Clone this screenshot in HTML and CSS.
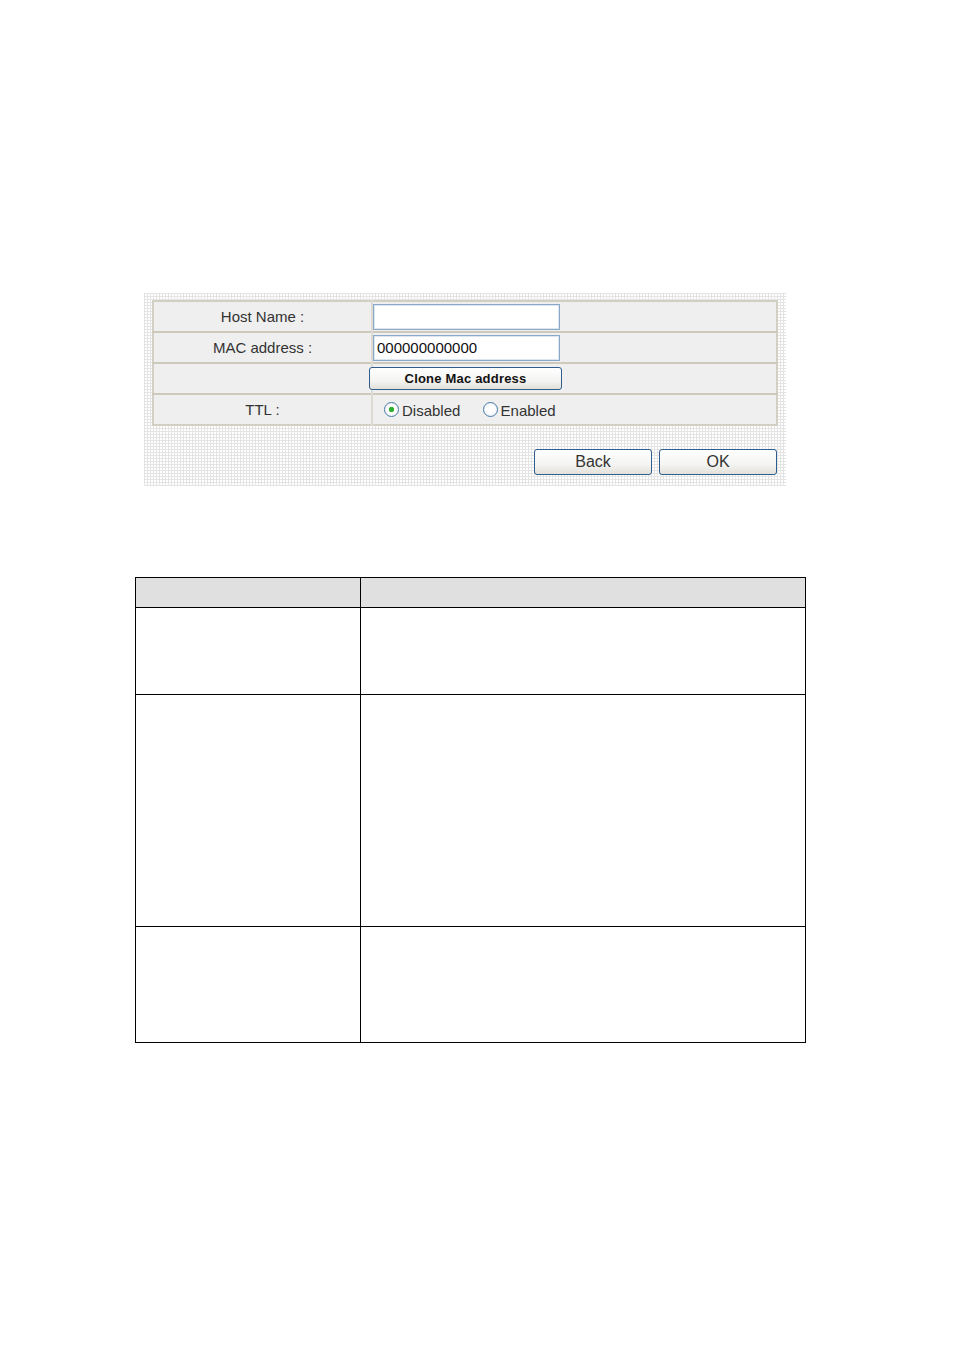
FILE: index.html
```html
<!DOCTYPE html>
<html>
<head>
<meta charset="utf-8">
<link rel="stylesheet" href="styles.css">
</head>
<body>
<div class="page">
  <div class="panel">
    <table class="form">
      <tr>
        <td class="label">Host Name :</td>
        <td class="value"><span class="input"></span></td>
      </tr>
      <tr>
        <td class="label">MAC address :</td>
        <td class="value"><span class="input">000000000000</span></td>
      </tr>
      <tr>
        <td class="label empty"></td>
        <td class="value"><span class="btn clone">Clone Mac address</span></td>
      </tr>
      <tr>
        <td class="label">TTL :</td>
        <td class="value radios">
          <span class="radio checked"></span><span class="rlabel">Disabled</span>
          <span class="radio second"></span><span class="rlabel">Enabled</span>
        </td>
      </tr>
    </table>
    <div class="actions">
      <span class="btn big">Back</span>
      <span class="btn big">OK</span>
    </div>
  </div>

  <table class="desc">
    <tr class="head"><td class="c1"></td><td class="c2"></td></tr>
    <tr class="r1"><td></td><td></td></tr>
    <tr class="r2"><td></td><td></td></tr>
    <tr class="r3"><td></td><td></td></tr>
  </table>
</div>
</body>
</html>
```

FILE: styles.css
```css
html, body {
  margin: 0;
  padding: 0;
  background: #ffffff;
}

.page {
  padding-top: 293px;
  font-family: "Liberation Sans", Arial, sans-serif;
}

.panel {
  margin-left: 144px;
  width: 642px;
  height: 193px;
  box-sizing: border-box;
  padding: 7px 0 0 8px;
  background-color: #ffffff;
  background-image:
    linear-gradient(to right, #e4e4e4 1px, transparent 1px),
    linear-gradient(to bottom, #e4e4e4 1px, transparent 1px);
  background-size: 3px 3px;
}

.form {
  width: 626px;
  border-collapse: collapse;
  border: 2px solid #d2cfc4;
  background: #efefef;
}

.form td {
  height: 29px;
  padding: 0;
  border-top: 2px solid #cdc9bb;
  font-size: 15px;
  color: #333;
}

.form tr:first-child td {
  border-top: none;
}

.form .label {
  width: 217px;
  text-align: center;
  border-right: 2px solid #dcdad2;
}

.input {
  display: flex;
  align-items: center;
  box-sizing: border-box;
  width: 187px;
  height: 26px;
  background: #ffffff;
  border: 1px solid #8aa8c8;
  box-shadow: inset 0 0 0 1px #dde6ef;
  padding-left: 3px;
  font-size: 15px;
  color: #111;
}

.btn {
  display: inline-flex;
  align-items: center;
  justify-content: center;
  box-sizing: border-box;
  border: 1px solid #2d5e8e;
  border-radius: 3px;
  background: linear-gradient(to bottom, #ffffff 0%, #f4f4f2 60%, #e2e0da 100%);
  color: #111;
}

.clone {
  width: 193px;
  height: 23px;
  margin-left: -4px;
  font-weight: bold;
  font-size: 13px;
  letter-spacing: 0.2px;
}

.radio {
  display: inline-block;
  vertical-align: middle;
  box-sizing: border-box;
  width: 15px;
  height: 15px;
  border-radius: 50%;
  border: 1px solid #4a7aa8;
  background: radial-gradient(circle, #ffffff 40%, #dfe6ee 100%);
  margin-left: 11px;
  margin-right: 3px;
  position: relative;
  top: -1px;
}

.radio.checked {
  background: radial-gradient(circle, #2fb02f 0, #2fb02f 2.5px, #ffffff 3px, #ffffff 45%, #dfe6ee 100%);
}

.radio.second {
  margin-left: 18px;
}

.rlabel {
  vertical-align: middle;
  font-size: 15px;
  color: #333;
}

.actions {
  display: flex;
  justify-content: flex-end;
  gap: 7px;
  width: 625px;
  margin-top: 23px;
}

.big {
  width: 118px;
  height: 26px;
  font-size: 16px;
  color: #333;
}

.desc {
  margin-left: 135px;
  margin-top: 91px;
  width: 671px;
  border-collapse: collapse;
}

.desc td {
  border: 1px solid #000;
  padding: 0;
}

.desc .c1 {
  width: 224px;
}

.desc .head td {
  height: 29px;
  background: #e0e0e0;
}

.desc .r1 td {
  height: 86px;
}

.desc .r2 td {
  height: 231px;
}

.desc .r3 td {
  height: 115px;
}
```
